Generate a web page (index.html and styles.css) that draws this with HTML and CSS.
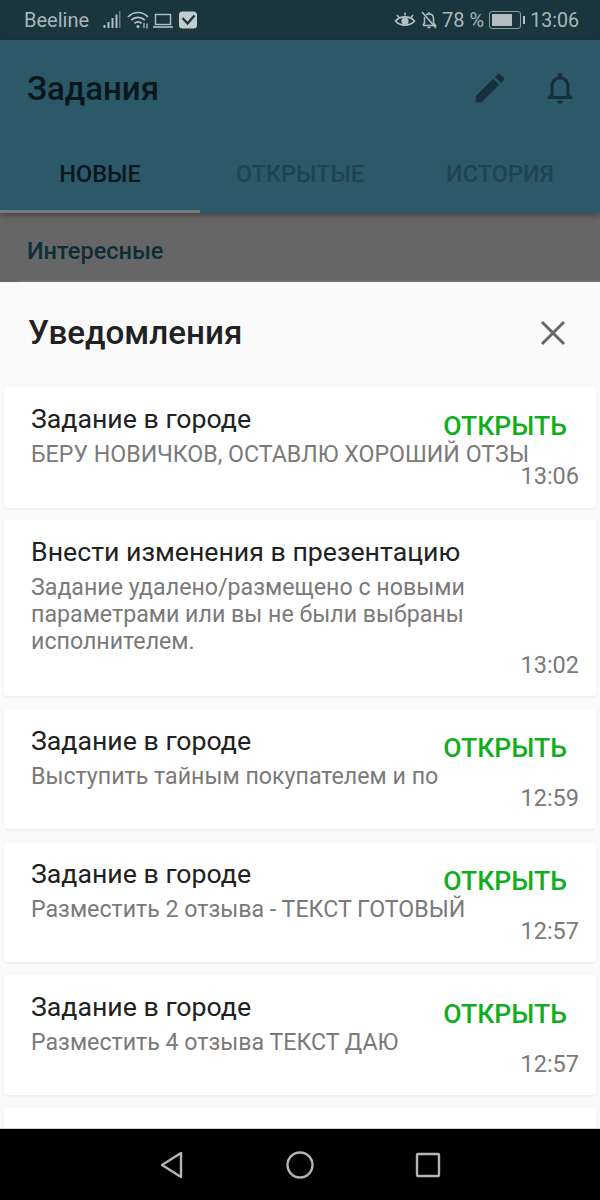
FILE: index.html
```html
<!DOCTYPE html>
<html lang="ru">
  <head>
    <meta charset="UTF-8" />
    <title>Задания</title>
    <link rel="stylesheet" href="styles.css">
  </head>

  <body>
    <div class="phone">
      <div class="statusbar">
        <div class="status-left">
          <span class="carrier">Beeline</span>
          <svg class="ic-signal" width="19" height="20" viewBox="0 0 19 20">
            <rect x="1.500" y="15" width="2" height="3" fill="#b4c0c4"/>
            <rect x="5.500" y="12" width="2" height="6" fill="#b4c0c4"/>
            <rect x="9.500" y="8" width="2" height="10" fill="#b4c0c4"/>
            <rect x="13.500" y="4.500" width="2" height="13.500" fill="#b4c0c4"/>
            <rect x="17" y="1" width="1.500" height="17" fill="#66797f"/>
          </svg>
          <svg class="ic-wifi" width="22" height="20" viewBox="0 0 22 20" fill="none" stroke="#b4c0c4" stroke-width="1.7">
            <path d="M1 7 C6.500 1 15.500 1 21 7"/>
            <path d="M4.200 10.200 C8 6.400 14 6.400 17.800 10.200"/>
            <path d="M7.400 13.400 C9.500 11.600 12.500 11.600 14.600 13.400"/>
            <circle cx="11" cy="16.500" r="1.500" fill="#b4c0c4" stroke="none"/>
            <path d="M17 13 v5 M20 13.500 v5" stroke-width="1.300"/>
          </svg>
          <svg class="ic-laptop" width="20" height="20" viewBox="0 0 20 20" fill="none" stroke="#b4c0c4">
            <rect x="2.500" y="4.500" width="15" height="10" stroke-width="1.400"/>
            <path d="M0 17 H20" stroke-width="1.600"/>
          </svg>
          <svg class="ic-check" width="20" height="20" viewBox="0 0 20 20">
            <rect x="1" y="1.500" width="18" height="17" rx="3.500" fill="#c3cdd0"/>
            <path d="M4.500 8 L9.500 13.500 L16.500 5.500" fill="none" stroke="#1d363f" stroke-width="2.400"/>
          </svg>
        </div>
        <div class="status-right">
          <svg width="22" height="20" viewBox="0 0 22 20" fill="none" stroke="#b4c0c4">
            <path d="M1.500 11 C6 5.500 16 5.500 20.500 11 C16 16.500 6 16.500 1.500 11 Z" stroke-width="1.600"/>
            <circle cx="11" cy="11" r="3.600" fill="#b4c0c4" stroke="none"/>
            <path d="M3 5 L5 7.500 M11 2.500 V5.500 M19 5 L17 7.500" stroke-width="1.500"/>
          </svg>
          <svg width="20" height="20" viewBox="0 0 20 20" fill="none" stroke="#b4c0c4" stroke-width="1.500">
            <path d="M4 15.500 H16.500 L14.500 13 V8.500 C14.500 5.500 12.500 4 10 4 C8.800 4 7.800 4.300 7 4.900 M5.600 7 C5.500 7.500 5.500 8 5.500 8.500 V13 L4 15.500"/>
            <path d="M3 2 L17 18"/>
            <path d="M8.500 17.500 H11.500" stroke-width="1.600"/>
            <path d="M10 2 V4"/>
          </svg>
          <span class="batt-text">78 %</span>
          <div class="battery">
            <div class="battery-body"><div class="battery-fill"></div></div>
            <div class="battery-tip"></div>
          </div>
          <span class="clock">13:06</span>
        </div>
      </div>

      <header class="appbar">
        <div class="appbar-top">
          <h1>Задания</h1>
          <div class="appbar-icons">
            <svg width="38" height="38" viewBox="0 0 24 24" fill="#16303a">
              <path d="M3 17.250V21h3.750L17.810 9.940l-3.750-3.750L3 17.250zM20.710 7.040a1 1 0 0 0 0-1.410l-2.340-2.340a1 1 0 0 0-1.410 0l-1.830 1.830 3.750 3.750 1.830-1.830z"/>
            </svg>
            <svg width="38" height="38" viewBox="0 0 24 24" fill="#16303a">
              <path d="M12 22c1.100 0 2-.9 2-2h-4c0 1.100.9 2 2 2zm6-6v-5c0-3.070-1.630-5.640-4.500-6.320V4c0-.83-.67-1.500-1.500-1.500s-1.500.67-1.500 1.500v.68C7.640 5.360 6 7.920 6 11v5l-2 2v1h16v-1l-2-2zm-2 1H8v-6c0-2.480 1.510-4.500 4-4.500s4 2.020 4 4.500v6z"/>
            </svg>
          </div>
        </div>
        <nav class="tabs">
          <div class="tab active">НОВЫЕ</div>
          <div class="tab">ОТКРЫТЫЕ</div>
          <div class="tab">ИСТОРИЯ</div>
        </nav>
      </header>

      <div class="behind">
        <div class="behind-title">Интересные</div>
        <div class="behind-card"></div>
      </div>

      <section class="sheet">
        <div class="sheet-head">
          <h2>Уведомления</h2>
          <svg class="close" width="26" height="26" viewBox="0 0 26 26" fill="none" stroke="#666666" stroke-width="3">
            <path d="M2 2 L24 24 M24 2 L2 24"/>
          </svg>
        </div>

        <div class="list">
          <div class="card">
            <div class="card-title">Задание в городе</div>
            <div class="card-text nowrap">БЕРУ НОВИЧКОВ, ОСТАВЛЮ ХОРОШИЙ ОТЗЫ</div>
            <a class="open">ОТКРЫТЬ</a>
            <div class="card-time">13:06</div>
          </div>

          <div class="card card-long">
            <div class="card-title">Внести изменения в презентацию</div>
            <div class="card-text">Задание удалено/размещено с новыми параметрами или вы не были выбраны исполнителем.</div>
            <div class="card-time">13:02</div>
          </div>

          <div class="card">
            <div class="card-title">Задание в городе</div>
            <div class="card-text nowrap">Выступить тайным покупателем и по</div>
            <a class="open">ОТКРЫТЬ</a>
            <div class="card-time">12:59</div>
          </div>

          <div class="card">
            <div class="card-title">Задание в городе</div>
            <div class="card-text nowrap">Разместить 2 отзыва - ТЕКСТ ГОТОВЫЙ</div>
            <a class="open">ОТКРЫТЬ</a>
            <div class="card-time">12:57</div>
          </div>

          <div class="card">
            <div class="card-title">Задание в городе</div>
            <div class="card-text nowrap">Разместить 4 отзыва ТЕКСТ ДАЮ</div>
            <a class="open">ОТКРЫТЬ</a>
            <div class="card-time">12:57</div>
          </div>

          <div class="card card-cut"></div>
        </div>
      </section>

      <div class="navbar">
        <svg width="26" height="30" viewBox="0 0 26 30" fill="none" stroke="#b5b5b5" stroke-width="2.400" stroke-linejoin="round">
          <path d="M22 3 V27 L3 15 Z"/>
        </svg>
        <svg width="30" height="30" viewBox="0 0 30 30" fill="none" stroke="#b5b5b5" stroke-width="2.400">
          <circle cx="15" cy="15" r="12.500"/>
        </svg>
        <svg width="26" height="26" viewBox="0 0 26 26" fill="none" stroke="#b5b5b5" stroke-width="2.400" stroke-linejoin="round">
          <rect x="2" y="2" width="22" height="22" rx="1"/>
        </svg>
      </div>
    </div>
  </body>
</html>
```

FILE: styles.css
```css
html,
body {
  margin: 0;
  padding: 0;
}

body {
  background-color: #000000;
  font-family: Roboto, "Noto Sans", sans-serif;
}

.phone {
  width: 600px;
  height: 1200px;
  display: flex;
  flex-direction: column;
  overflow: hidden;
}

.statusbar {
  height: 40px;
  flex: none;
  display: flex;
  justify-content: space-between;
  align-items: center;
  padding: 0 21px 0 24px;
  background-color: #1b353e;
  color: #a9b7bb;
  font-size: 20px;
}

.status-left,
.status-right {
  display: flex;
  align-items: center;
}

.carrier {
  margin-right: 13px;
}

.ic-signal {
  margin-right: 6px;
}

.ic-wifi {
  margin-right: 4px;
}

.ic-laptop {
  margin-right: 5px;
}

.status-right svg {
  margin-right: 3px;
}

.batt-text {
  margin: 0 5px 0 0;
}

.battery {
  display: flex;
  align-items: center;
  margin-right: 5px;
}

.battery-body {
  width: 26px;
  height: 12px;
  border: 1px solid #8d9da2;
  border-radius: 3px;
  padding: 2px;
}

.battery-fill {
  width: 78%;
  height: 100%;
  background-color: #b4bec1;
}

.battery-tip {
  width: 2px;
  height: 8px;
  margin-left: 2px;
  background-color: #b4c0c4;
}

.clock {
  font-size: 19.600px;
}

.appbar {
  height: 173px;
  flex: none;
  background-color: #2b5968;
  display: flex;
  flex-direction: column;
  box-shadow: 0 3px 6px rgba(0, 0, 0, 0.3);
  position: relative;
}

.appbar-top {
  height: 96px;
  display: flex;
  justify-content: space-between;
  align-items: center;
  padding: 0 21px 0 27px;
}

h1 {
  margin: 0;
  font-size: 33px;
  font-weight: 500;
  color: #08171c;
}

.appbar-icons {
  display: flex;
  gap: 32px;
}

.tabs {
  flex: 1;
  display: flex;
}

.tab {
  flex: 1;
  display: flex;
  justify-content: center;
  align-items: center;
  padding-top: 2px;
  font-size: 23.500px;
  font-weight: 500;
  color: #1f4350;
  border-bottom: 3px solid transparent;
}

.tab.active {
  color: #08171c;
  border-bottom-color: #6f7a7d;
}

.behind {
  height: 69px;
  flex: none;
  background-color: #666666;
  padding: 0 0 0 18px;
  box-sizing: border-box;
  display: flex;
  flex-direction: column;
  justify-content: space-between;
}

.behind-title {
  padding: 24px 0 0 9px;
  font-size: 23.500px;
  font-weight: 500;
  color: #0d2d38;
}

.behind-card {
  height: 2px;
  background-color: #6e6e6e;
}

.sheet {
  flex: 1;
  min-height: 0;
  background-color: #fafafa;
  overflow: hidden;
  display: flex;
  flex-direction: column;
}

.sheet-head {
  height: 105px;
  flex: none;
  display: flex;
  justify-content: space-between;
  align-items: center;
  padding: 0 34px 4px 28px;
  box-sizing: border-box;
}

h2 {
  margin: 0;
  font-size: 33.200px;
  font-weight: 500;
  color: #212121;
}

.list {
  padding: 0 4px;
  display: flex;
  flex-direction: column;
  gap: 12.500px;
}

.card {
  position: relative;
  height: 120.500px;
  flex: none;
  box-sizing: border-box;
  padding: 13px 21px 0 27px;
  background-color: #ffffff;
  border-radius: 4px;
  box-shadow: 0 1px 3px rgba(0, 0, 0, 0.07);
}

.card-long {
  height: 176px;
}

.card-cut {
  height: 60px;
}

.card-title {
  font-size: 26.700px;
  line-height: 38px;
  color: #212121;
}

.card-text {
  margin-top: 3px;
  font-size: 23.200px;
  line-height: 27px;
  color: #7a7a7a;
}

.nowrap {
  white-space: nowrap;
}

.open {
  position: absolute;
  top: 23px;
  right: 29px;
  font-size: 26.600px;
  line-height: 32px;
  font-weight: 500;
  color: #12ad1e;
}

.card-time {
  position: absolute;
  right: 17px;
  bottom: 17.500px;
  font-size: 23.500px;
  line-height: 28px;
  color: #7a7a7a;
}

.navbar {
  height: 72px;
  flex: none;
  background-color: #000000;
  border-top: 1px solid #cfcfcf;
  box-sizing: border-box;
  display: flex;
  justify-content: center;
  align-items: center;
  gap: 100px;
}
```
